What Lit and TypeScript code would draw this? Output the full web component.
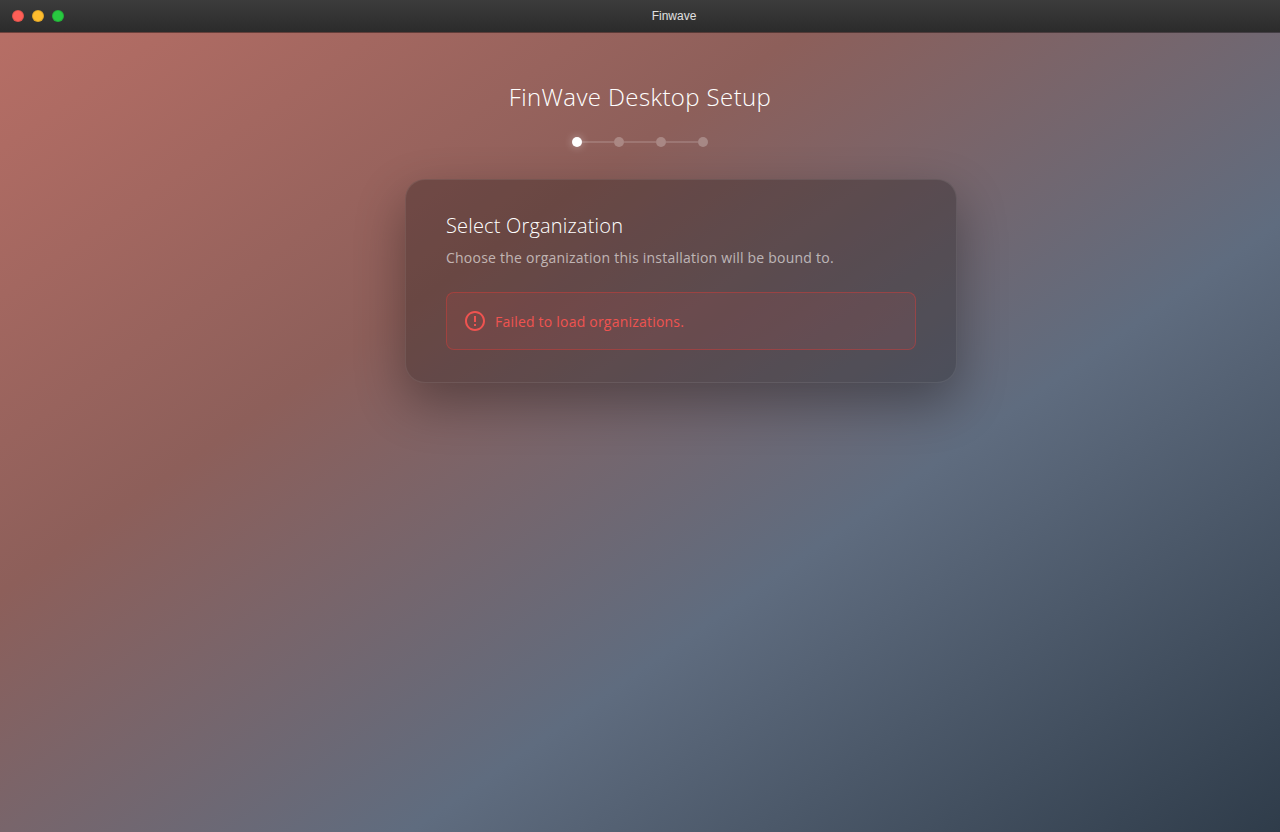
import { LitElement, html, css } from "lit";
import { customElement, property } from "lit/decorators.js";

@customElement("setup-steps")
class SetupSteps extends LitElement {
  @property({ type: Number }) total = 4;
  @property({ type: Number }) current = 0;

  static styles = css`
    :host { display: flex; align-items: center; justify-content: center; }
    .dot { width: 10px; height: 10px; border-radius: 50%; background: rgba(255, 255, 255, 0.25); }
    .active { background: #fff; box-shadow: 0 0 8px rgba(255, 255, 255, 0.4); }
    .line { width: 32px; height: 2px; background: rgba(255, 255, 255, 0.15); }
  `;

  render() {
    return Array.from({ length: this.total }, (_, i) => html`
      ${i ? html`<div class="line"></div>` : ""}
      <div class="dot ${i === this.current ? "active" : ""}"></div>
    `);
  }
}

@customElement("app-root")
class AppRoot extends LitElement {
  static styles = css`
    :host {
      display: flex;
      flex-direction: column;
      height: 100vh;
      overflow: hidden;
      font-family: "Open Sans", sans-serif;
      color: #fff;
      background: linear-gradient(145deg, #b96f66 0%, #8d5f5a 34.3%, #5f6c7f 64.7%, #2f3c4a 100%);
    }
    * { box-sizing: border-box; }
    .titlebar {
      height: 33px;
      flex: none;
      display: flex;
      align-items: center;
      padding: 0 12px;
      background: linear-gradient(#3c3c3c, #2b2b2b) padding-box;
      border-bottom: 1px solid rgba(0, 0, 0, 0.4);
    }
    .lights { display: flex; gap: 8px; width: 52px; }
    .light { width: 12px; height: 12px; border-radius: 50%; border: 1px solid rgba(0, 0, 0, 0.12); }
    .close { background: #ff5f57; }
    .min { background: #ffbd2e; }
    .max { background: #28c940; }
    .name {
      flex: 1;
      padding-left: 16px;
      text-align: center;
      font: 12px/14px "Liberation Sans", sans-serif;
      color: #e0e0e0;
    }
    .content {
      flex: 1;
      display: flex;
      flex-direction: column;
      align-items: center;
    }
    .title {
      margin: 46px 0 0;
      font-size: 24px;
      line-height: 36px;
      font-weight: 300;
      letter-spacing: 0.38px;
    }
    setup-steps { margin-top: 22px; }
    .card {
      width: 552px;
      margin: 32px 0 0 82px;
      padding: 31px 40px 32px;
      border: 1px solid rgba(255, 255, 255, 0.08);
      border-radius: 20px;
      background: rgba(0, 0, 0, 0.25);
      box-shadow: 0 20px 50px rgba(0, 0, 0, 0.33);
    }
    .heading { margin: 0; font-size: 20px; line-height: 30px; font-weight: 300; letter-spacing: 0.18px; }
    .hint { margin: 6px 0 0; font-size: 14px; line-height: 21px; letter-spacing: 0.23px; color: rgba(255, 255, 255, 0.6); }
    .alert {
      display: flex;
      align-items: center;
      gap: 10px;
      height: 58px;
      margin-top: 24px;
      padding: 0 18px;
      border: 1px solid rgba(229, 57, 53, 0.4);
      border-radius: 8px;
      background: rgba(239, 83, 80, 0.1);
      color: #ef5350;
      font-size: 14px;
      line-height: 20px;
      letter-spacing: 0.21px;
    }
    .message { padding-top: 2px; }
    .icon { width: 20px; height: 20px; display: block; }
  `;

  render() {
    return html`
      <header class="titlebar">
        <div class="lights">
          <span class="light close"></span>
          <span class="light min"></span>
          <span class="light max"></span>
        </div>
        <div class="name">Finwave</div>
      </header>
      <main class="content">
        <h1 class="title">FinWave Desktop Setup</h1>
        <setup-steps></setup-steps>
        <section class="card">
          <h2 class="heading">Select Organization</h2>
          <p class="hint">Choose the organization this installation will be bound to.</p>
          <div class="alert" role="alert">
            <svg class="icon" viewBox="2 2 20 20" fill="currentColor">
              <path d="M11 15h2v2h-2zm0-8h2v6h-2zm.99-5C6.47 2 2 6.48 2 12s4.47 10 9.99 10C17.52 22 22 17.52 22 12S17.52 2 11.99 2zM12 20c-4.42 0-8-3.58-8-8s3.58-8 8-8 8 3.58 8 8-3.58 8-8 8z" />
            </svg>
            <span class="message">Failed to load organizations.</span>
          </div>
        </section>
      </main>
    `;
  }
}
